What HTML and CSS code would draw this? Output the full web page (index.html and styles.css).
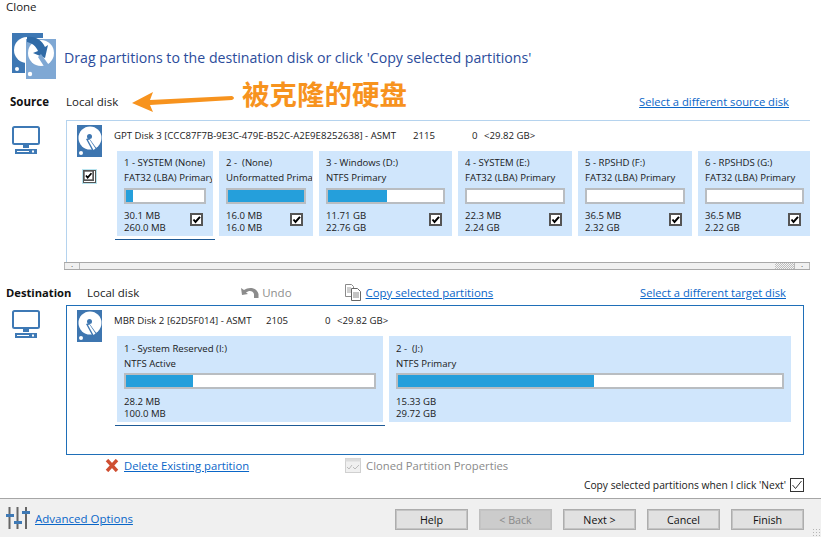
FILE: index.html
```html
<!DOCTYPE html>
<html lang="en">
<head>
    <meta charset="UTF-8">
    <title>Clone</title>
    <link rel="stylesheet" href="styles.css">
</head>
<body>
<svg class="defs" width="0" height="0">
    <symbol id="disk" viewBox="0 0 25 32">
        <rect width="25" height="32" fill="#3e76b0"/>
        <circle cx="13" cy="13" r="11.5" fill="#fff"/>
        <circle cx="12.500" cy="11.500" r="2.500" fill="#3e76b0"/>
        <path d="M9 14 L12 13 L20 24 L16 27 Z" fill="#3e76b0"/>
        <path d="M11 15 L12.500 14.500 L18.500 23.500 L16.500 25 Z" fill="#fff"/>
        <circle cx="4" cy="28" r="2" fill="#fff"/>
    </symbol>
    <symbol id="monitor" viewBox="0 0 28 28">
        <rect x="1" y="1" width="26" height="17" rx="1.500" fill="none" stroke="#3e79b5" stroke-width="2"/>
        <rect x="11" y="19" width="6" height="3" fill="#3e79b5"/>
        <rect x="3" y="23" width="22" height="5" fill="#3e79b5"/>
        <rect x="5" y="25" width="12" height="1" fill="#fff"/>
        <rect x="20" y="24.500" width="2" height="2" fill="#fff"/>
    </symbol>
    <symbol id="tick" viewBox="0 0 13 13">
        <rect x="1" y="1" width="11" height="11" fill="#fff" stroke="#555" stroke-width="2"/>
        <path d="M3.500 6.500 L5.500 9 L10 3.800" fill="none" stroke="#000" stroke-width="2"/>
    </symbol>
</svg>

<div class="app">
    <div class="title">Clone</div>

    <div class="intro">
        <svg class="intro-icon" width="44" height="46" viewBox="0 0 44 46">
            <rect x="0" y="0" width="31" height="40" fill="#3e78b4"/>
            <circle cx="15" cy="17" r="13" fill="#fff"/>
            <circle cx="5" cy="36" r="2" fill="#fff"/>
            <rect x="13" y="5" width="31" height="41" fill="#fff"/>
            <rect x="14" y="6" width="30" height="40" fill="#7fa8d4"/>
            <circle cx="29" cy="20" r="13" fill="#fff"/>
            <circle cx="18" cy="41" r="2.200" fill="#fff"/>
            <path d="M15 4 C23 3 30 7 33 14 L36 12 L33 25 L21 20 L26 18 C24 13 20 10 15 9 Z" fill="#2f6aa6"/>
            <path d="M26 24 L29 21 L39 35 L35 38 Z" fill="#7fa8d4"/>
        </svg>
        <div class="intro-text">Drag partitions to the destination disk or click 'Copy selected partitions'</div>
    </div>

    <div class="head head-source">
        <b class="head-label">Source</b>
        <span class="head-disk">Local disk</span>
        <a class="link head-right" href="#">Select a different source disk</a>
        <!-- annotation drawn over the screenshot -->
        <svg class="note-arrow" width="104" height="24" viewBox="0 0 104 24">
            <path d="M0 15 L21 4 L18 12 L100 8 Q104 10 100 12 L18 17 L21 24 Z" fill="#f7931e"/>
        </svg>
        <span class="note-text">被克隆的硬盘</span>
    </div>

    <div class="disk-row source-row">
        <svg class="monitor"><use href="#monitor"/></svg>
        <div class="panel panel-source">
            <div class="disk-side">
                <svg class="disk-icon"><use href="#disk"/></svg>
                <span class="disk-check"><svg width="11" height="11" viewBox="1 1 11 11"><use href="#tick"/></svg></span>
            </div>
            <div class="disk-main">
                <div class="disk-title">
                    <span class="t-name">GPT Disk 3 [CCC87F7B-9E3C-479E-B52C-A2E9E8252638] - ASMT</span>
                    <span class="t-num">2115</span>
                    <span class="t-zero">0</span>
                    <span class="t-size">&lt;29.82 GB&gt;</span>
                </div>
                <div class="parts">
                    <div class="part selected w1">
                        <div class="p-name">1 - SYSTEM (None)</div>
                        <div class="p-type">FAT32 (LBA) Primary</div>
                        <div class="bar"><div class="fill" style="width:9%"></div></div>
                        <div class="p-foot"><div class="p-sizes">30.1 MB<br>260.0 MB</div><svg class="tick"><use href="#tick"/></svg></div>
                    </div>
                    <div class="part w2">
                        <div class="p-name">2 -&nbsp; (None)</div>
                        <div class="p-type">Unformatted Primary</div>
                        <div class="bar"><div class="fill" style="width:100%"></div></div>
                        <div class="p-foot"><div class="p-sizes">16.0 MB<br>16.0 MB</div><svg class="tick"><use href="#tick"/></svg></div>
                    </div>
                    <div class="part w3">
                        <div class="p-name">3 - Windows (D:)</div>
                        <div class="p-type">NTFS Primary</div>
                        <div class="bar"><div class="fill" style="width:51%"></div></div>
                        <div class="p-foot"><div class="p-sizes">11.71 GB<br>22.76 GB</div><svg class="tick"><use href="#tick"/></svg></div>
                    </div>
                    <div class="part w4">
                        <div class="p-name">4 - SYSTEM (E:)</div>
                        <div class="p-type">FAT32 (LBA) Primary</div>
                        <div class="bar"></div>
                        <div class="p-foot"><div class="p-sizes">22.3 MB<br>2.24 GB</div><svg class="tick"><use href="#tick"/></svg></div>
                    </div>
                    <div class="part w4">
                        <div class="p-name">5 - RPSHD (F:)</div>
                        <div class="p-type">FAT32 (LBA) Primary</div>
                        <div class="bar"></div>
                        <div class="p-foot"><div class="p-sizes">36.5 MB<br>2.32 GB</div><svg class="tick"><use href="#tick"/></svg></div>
                    </div>
                    <div class="part w5">
                        <div class="p-name">6 - RPSHDS (G:)</div>
                        <div class="p-type">FAT32 (LBA) Primary</div>
                        <div class="bar"></div>
                        <div class="p-foot"><div class="p-sizes">36.5 MB<br>2.22 GB</div><svg class="tick"><use href="#tick"/></svg></div>
                    </div>
                </div>
            </div>
        </div>
    </div>
    <div class="scroll">
        <div class="scroll-btn scroll-left">·</div>
        <div class="scroll-track"></div>
        <div class="scroll-dither"></div>
        <div class="scroll-btn scroll-right">·</div>
    </div>

    <div class="head head-dest">
        <b class="head-label">Destination</b>
        <span class="head-disk">Local disk</span>
        <svg class="undo-icon" width="18" height="11" viewBox="0 0 18 11">
            <path d="M0 1 L1 8 L7 7 L5 5.500 C8 3 12 3.500 13 7 L13 11 L17.500 11 L17.500 7 C16 0.500 8 -0.500 3 3 Z" fill="#8c8c8c"/>
        </svg>
        <span class="undo-text">Undo</span>
        <svg class="copy-icon" width="16" height="17" viewBox="0 0 16 17">
            <path d="M0.500 0.500 H6.500 L8.500 2.500 V12.500 H0.500 Z" fill="#fff" stroke="#8a8a8a"/>
            <path d="M2 4 H6 M2 6 H6 M2 8 H6" stroke="#a0a0a0"/>
            <path d="M6.500 4.500 H12.500 L15.500 7.500 V16.500 H6.500 Z" fill="#fff" stroke="#666"/>
            <path d="M8 9 H14 M8 11 H14 M8 13 H14" stroke="#888"/>
        </svg>
        <a class="link copy-link" href="#">Copy selected partitions</a>
        <a class="link target-link" href="#">Select a different target disk</a>
    </div>

    <div class="disk-row">
        <svg class="monitor monitor-dest"><use href="#monitor"/></svg>
        <div class="panel panel-dest">
            <div class="disk-side">
                <svg class="disk-icon"><use href="#disk"/></svg>
            </div>
            <div class="disk-main">
                <div class="disk-title">
                    <span class="t-name t-name-dest">MBR Disk 2 [62D5F014] - ASMT</span>
                    <span class="t-num">2105</span>
                    <span class="t-zero">0</span>
                    <span class="t-size">&lt;29.82 GB&gt;</span>
                </div>
                <div class="parts">
                    <div class="part part-dest selected w6">
                        <div class="p-name">1 - System Reserved (I:)</div>
                        <div class="p-type">NTFS Active</div>
                        <div class="bar"><div class="fill" style="width:27%"></div></div>
                        <div class="p-sizes">28.2 MB<br>100.0 MB</div>
                    </div>
                    <div class="part part-dest w7">
                        <div class="p-name">2 -&nbsp; (J:)</div>
                        <div class="p-type">NTFS Primary</div>
                        <div class="bar"><div class="fill" style="width:51%"></div></div>
                        <div class="p-sizes">15.33 GB<br>29.72 GB</div>
                    </div>
                </div>
            </div>
        </div>
    </div>

    <div class="actions">
        <svg class="x-icon" width="14" height="13" viewBox="0 0 14 13">
            <path d="M2 1 L12 12 M12 1 L2 12" stroke="#cf4f32" stroke-width="3.400" fill="none"/>
        </svg>
        <a class="link" href="#">Delete Existing partition</a>
        <svg class="props-icon" width="16" height="15" viewBox="0 0 16 15">
            <rect x="0.500" y="0.500" width="15" height="14" fill="#f0f0f0" stroke="#d0d0d0"/>
            <rect x="0.500" y="0.500" width="15" height="3" fill="#dcdcdc"/>
            <path d="M2 9 L4 11 L7 7 M8 9 L10 11 L14 7" fill="none" stroke="#bbb"/>
        </svg>
        <span class="props-text">Cloned Partition Properties</span>
    </div>

    <div class="copy-row">
        <span>Copy selected partitions when I click 'Next'</span>
        <svg class="next-check" width="14" height="14" viewBox="0 0 14 14">
            <rect x="0.500" y="0.500" width="13" height="13" fill="#fff" stroke="#333"/>
            <path d="M2.500 7 L5.500 10.500 L11.500 3" fill="none" stroke="#333"/>
        </svg>
    </div>

    <div class="footer">
        <svg class="sliders" width="24" height="22" viewBox="0 0 24 22">
            <path d="M3.500 0 V22 M11.500 0 V22 M20 0 V22" stroke="#666" stroke-width="2"/>
            <rect x="0" y="7" width="8" height="3" fill="#3e79b5"/>
            <rect x="8" y="14" width="8" height="3" fill="#3e79b5"/>
            <rect x="16" y="4" width="8" height="3" fill="#3e79b5"/>
        </svg>
        <a class="link adv-link" href="#">Advanced Options</a>
        <div class="buttons">
            <button class="btn">Help</button>
            <button class="btn" disabled>&lt; Back</button>
            <button class="btn">Next &gt;</button>
            <button class="btn">Cancel</button>
            <button class="btn">Finish</button>
        </div>
        <div class="grip"></div>
    </div>
</div>
</body>
</html>
```

FILE: styles.css
```css
body {
    margin: 0;
    background-color: #fff;
    font-family: "Open Sans", "Noto Sans", sans-serif;
    font-size: 11.5px;
    color: #1a1a1a;
}

.defs {
    display: block;
    height: 0;
}

.app {
    width: 821px;
    height: 537px;
    overflow: hidden;
    display: flex;
    flex-direction: column;
}

.title {
    height: 33px;
    padding-left: 6px;
    line-height: 13px;
}

/* intro line */
.intro {
    height: 59px;
    padding-left: 12px;
    display: flex;
}

.intro-icon {
    flex: none;
}

.intro-text {
    margin-left: 8px;
    margin-top: 14px;
    font-size: 14.150px;
    line-height: 22px;
    color: #2b4c9b;
}

/* section headings */
.head {
    position: relative;
    display: flex;
    align-items: center;
    box-sizing: border-box;
    height: 20px;
    padding-bottom: 2px;
}

.head-source {
    margin-bottom: 8px;
}

.head-source .head-label {
    margin-left: 10px;
    width: 56px;
}

.head-dest .head-label {
    margin-left: 6px;
    width: 81px;
    font-size: 11.200px;
}

.head-label {
    font-weight: 700;
    color: #111;
    white-space: nowrap;
}

.head-right {
    margin-left: auto;
    margin-right: 32px;
    font-size: 11.200px;
}

.link {
    color: #0a66c8;
    text-decoration: underline;
    white-space: nowrap;
}

.note-arrow {
    position: absolute;
    left: 132px;
    top: -4px;
}

.note-text {
    position: absolute;
    left: 242px;
    top: -18px;
    font-family: "Noto Sans CJK SC", sans-serif;
    font-size: 27.500px;
    line-height: 38px;
    font-weight: 700;
    color: #f7931e;
}

/* disk panels */
.disk-row {
    display: flex;
    align-items: flex-start;
}

.monitor {
    flex: none;
    width: 28px;
    height: 28px;
    margin-left: 12px;
    margin-top: 6px;
    margin-right: 26px;
}

.monitor-dest {
    margin-top: 5px;
}

.panel {
    display: flex;
    box-sizing: border-box;
}

.panel-source {
    width: 744px;
    height: 142px;
    border-top: 1px solid #b5d3ee;
    border-left: 1px solid #b5d3ee;
}

.panel-dest {
    width: 738px;
    height: 150px;
    border: 1px solid #1f6fb8;
}

.disk-side {
    flex: none;
    width: 47px;
    padding-top: 4px;
    padding-left: 10px;
    box-sizing: border-box;
}

.disk-icon {
    display: block;
    width: 25px;
    height: 32px;
}

.disk-check {
    display: block;
    width: 11px;
    height: 11px;
    margin-top: 13px;
    margin-left: 6px;
    padding: 0;
    border: 1px solid #555;
    outline: 1px solid #b9e4ef;
    background-color: #fff;
}

.disk-check svg {
    display: block;
}

.disk-main {
    flex: 1;
    min-width: 0;
}

.disk-title {
    display: flex;
    height: 30px;
    line-height: 30px;
    font-size: 9.630px;
    white-space: nowrap;
}

.t-name {
    width: 299px;
}

.t-name-dest {
    width: 152px;
}

.t-num {
    width: 59px;
}

.t-zero {
    width: 12px;
}

.parts {
    display: flex;
    gap: 6px;
    margin-left: 3px;
}

.part {
    position: relative;
    flex: none;
    box-sizing: border-box;
    height: 85px;
    padding: 5px 7px 0;
    background-color: #d0e6fc;
    font-size: 9.600px;
}

.part-dest {
    height: 86px;
    padding-top: 6px;
}

.w1 { width: 96px; }
.w2 { width: 94px; }
.w3 { width: 133px; }
.w4 { width: 114px; }
.w5 { width: 112px; padding-right: 6px; }
.w6 { width: 266px; }
.w7 { width: 402px; }

.selected::after {
    content: "";
    position: absolute;
    left: -2px;
    right: -2px;
    bottom: -4px;
    height: 1px;
    background-color: #1e5a96;
}

.p-name,
.p-type {
    height: 15px;
    line-height: 14px;
    margin-right: -6px;
    white-space: nowrap;
    overflow: hidden;
}

.bar {
    box-sizing: border-box;
    height: 16px;
    margin-top: 2px;
    border: 2px solid #b9bdc1;
    background-color: #fff;
}

.part-dest .bar {
    margin-top: 1px;
}

.fill {
    height: 100%;
    background-color: #259fdb;
}

.p-foot {
    display: flex;
    justify-content: space-between;
    align-items: flex-start;
}

.p-sizes {
    margin-top: 6px;
    line-height: 11.500px;
}

.part-dest .p-sizes {
    margin-top: 7px;
}

.tick {
    flex: none;
    width: 13px;
    height: 13px;
    margin-top: 9px;
    margin-right: 3px;
}

/* fake horizontal scrollbar */
.scroll {
    display: flex;
    box-sizing: border-box;
    width: 746px;
    height: 8px;
    margin-left: 64px;
    border-top: 1px solid #a8a8a8;
    border-bottom: 1px solid #a8a8a8;
    background-color: #f0f0f0;
    margin-bottom: 13px;
}

.scroll-btn {
    width: 16px;
    font-size: 8px;
    line-height: 5px;
    text-align: center;
    border-left: 1px solid #b8b8b8;
    border-right: 1px solid #b8b8b8;
    box-sizing: border-box;
}

.scroll-track {
    flex: 1;
}

.scroll-dither {
    width: 19px;
    background-image: repeating-conic-gradient(#bdbdbd 0 25%, #f4f4f4 0 50%);
    background-size: 2px 2px;
}

.head-dest {
    margin-bottom: 2px;
}

.undo-icon {
    margin-left: 102px;
}

.undo-text {
    margin-left: 3px;
    color: #8e8e8e;
}

.copy-icon {
    margin-left: 53px;
}

.copy-link {
    margin-left: 5px;
    font-size: 11.400px;
}

.target-link {
    margin-left: auto;
    margin-right: 35px;
    font-size: 11.200px;
}

/* rows under the destination panel */
.actions {
    display: flex;
    align-items: center;
    height: 16px;
    margin-top: 2px;
    padding-left: 105px;
    font-size: 11.250px;
}

.x-icon {
    margin-right: 5px;
}

.props-icon {
    margin-left: 96px;
}

.props-text {
    margin-left: 5px;
    color: #8a8a8a;
}

.copy-row {
    display: flex;
    justify-content: flex-end;
    align-items: center;
    gap: 4px;
    height: 18px;
    margin-top: 3px;
    padding-right: 17px;
    font-size: 10.250px;
}

/* footer */
.footer {
    position: relative;
    flex: 1;
    display: flex;
    align-items: center;
    margin-top: 4px;
    padding-left: 6px;
    border-top: 1px solid #a6a6a6;
    background-color: #f0f0f0;
}

.adv-link {
    margin-left: 5px;
}

.buttons {
    display: flex;
    gap: 11px;
    margin-left: auto;
    margin-right: 17px;
    margin-top: 3px;
}

.btn {
    box-sizing: border-box;
    width: 73px;
    height: 21px;
    padding: 0;
    border: 1px solid #adadad;
    outline: 1px solid #c4c4c4;
    outline-offset: -2px;
    background-color: #e1e1e1;
    font-family: inherit;
    font-size: 10.700px;
    color: #111;
}

.btn:disabled {
    background-color: #ccc;
    border-color: #bfbfbf;
    color: #8a8a8a;
}

.grip {
    position: absolute;
    right: 1px;
    bottom: 1px;
    width: 8px;
    height: 8px;
    background-image: radial-gradient(#b5b5b5 1px, transparent 1px);
    background-size: 3px 3px;
}
```
